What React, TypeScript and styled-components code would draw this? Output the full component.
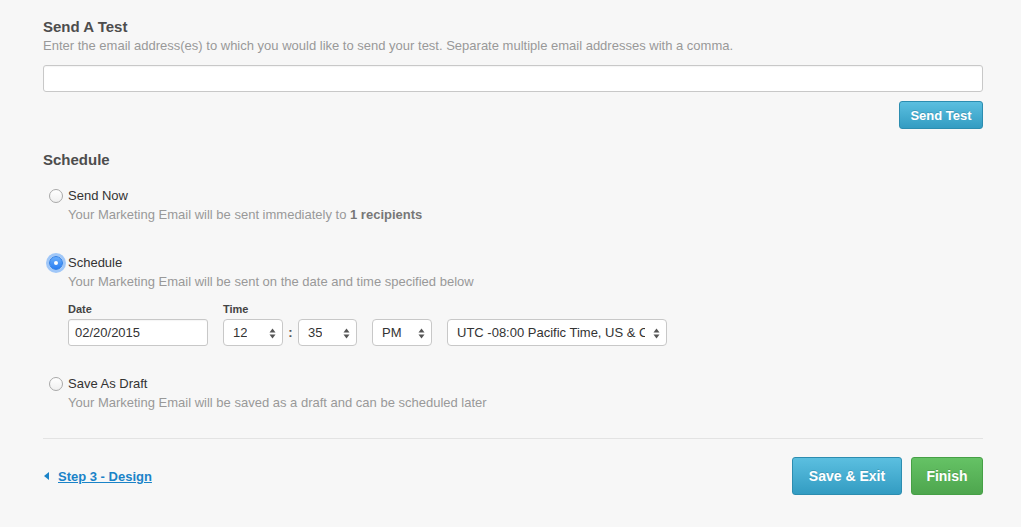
import React from "react";
import styled, { createGlobalStyle } from "styled-components";

const Global = createGlobalStyle`
  html, body { margin: 0; padding: 0; background: #f7f7f7; }
  body { font-family: "Liberation Sans", Arial, sans-serif; color: #333; }
`;

const Page = styled.div`
  width: 940px;
  padding: 18px 38px 0 43px;
  display: flex;
  flex-direction: column;
`;

const Heading = styled.h2`
  margin: 0;
  font-size: 15px;
  line-height: 18px;
  font-weight: bold;
  color: #4d4d4d;
`;

const Help = styled.p`
  margin: 1px 0 0;
  font-size: 13px;
  line-height: 17px;
  color: #999;
`;

const TextInput = styled.input<{ $w?: number }>`
  box-sizing: border-box;
  width: ${(p) => (p.$w ? `${p.$w}px` : "100%")};
  height: 27px;
  border: 1px solid #c8c8c8;
  border-radius: 3px;
  background: #fff;
  padding: 0 6px;
  font-family: "Liberation Sans", Arial, sans-serif;
  font-size: 13px;
  color: #333;
  outline: none;
  box-shadow: inset 0 1px 1px rgba(0,0,0,0.04);
`;

const EmailRow = styled.div`
  margin-top: 11px;
`;

const Actions = styled.div`
  display: flex;
  justify-content: flex-end;
  margin-top: 9px;
`;

const Button = styled.button<{ $variant: "blue" | "green"; $h: number; $w: number }>`
  box-sizing: border-box;
  height: ${(p) => p.$h}px;
  width: ${(p) => p.$w}px;
  border-radius: 3px;
  font-family: "Liberation Sans", Arial, sans-serif;
  font-weight: bold;
  font-size: ${(p) => (p.$h > 30 ? 14 : 13)}px;
  color: #fff;
  cursor: pointer;
  text-shadow: 0 -1px 0 rgba(0,0,0,0.15);
  border: 1px solid ${(p) => (p.$variant === "blue" ? "#2c8db0" : "#46a046")};
  background: ${(p) =>
    p.$variant === "blue"
      ? "linear-gradient(to bottom, #5bbfe0, #339cc2)"
      : "linear-gradient(to bottom, #65c265, #4ea64e)"};
  padding: 0;
`;

const SectionHead = styled(Heading)`
  margin-top: 22px;
`;

const Options = styled.div`
  display: flex;
  flex-direction: column;
  margin-top: 18px;
`;

const Option = styled.div<{ $gap: number }>`
  display: grid;
  grid-template-columns: 25px 1fr;
  margin-bottom: ${(p) => p.$gap}px;
`;

const RadioCell = styled.div`
  padding: 2px 0 0 6px;
`;

const Radio = styled.span<{ $on?: boolean }>`
  display: block;
  box-sizing: border-box;
  width: 14px;
  height: 14px;
  border-radius: 50%;
  position: relative;
  border: 1px solid ${(p) => (p.$on ? "#2f7fe6" : "#a9a9a9")};
  background: ${(p) =>
    p.$on ? "linear-gradient(to bottom, #6aaefc, #2a7ef2)" : "linear-gradient(to bottom, #fff, #f0f0f0)"};
  box-shadow: ${(p) => (p.$on ? "0 0 0 3px rgba(90,160,250,0.55)" : "none")};
  &::after {
    content: "";
    display: ${(p) => (p.$on ? "block" : "none")};
    position: absolute;
    left: 4px;
    top: 4px;
    width: 4px;
    height: 4px;
    border-radius: 50%;
    background: #fff;
  }
`;

const OptLabel = styled.div`
  font-size: 13px;
  line-height: 17px;
  color: #333;
`;

const OptHelp = styled.div`
  font-size: 13px;
  line-height: 17px;
  color: #999;
  margin-top: 2px;
  b { color: #777; }
`;

const Fields = styled.div`
  display: flex;
  align-items: flex-end;
  margin-top: 13px;
  gap: 15px;
`;

const Field = styled.div`
  display: flex;
  flex-direction: column;
`;

const FieldLabel = styled.label`
  font-size: 11px;
  font-weight: bold;
  color: #444;
  line-height: 13px;
  margin-bottom: 3px;
`;

const TimeGroup = styled.div`
  display: flex;
  align-items: center;
`;

const Colon = styled.span`
  width: 15px;
  text-align: center;
  font-size: 13px;
  color: #555;
  font-weight: bold;
`;

const SelectWrap = styled.div<{ $w: number }>`
  position: relative;
  box-sizing: border-box;
  width: ${(p) => p.$w}px;
  height: 27px;
  border: 1px solid #c8c8c8;
  border-radius: 4px;
  background: #fff;
  display: flex;
  align-items: center;
  padding: 0 0 0 9px;
  font-size: 13px;
  color: #333;
  white-space: nowrap;
`;

const SelText = styled.span<{ $clip?: number }>`
  display: block;
  overflow: hidden;
  text-overflow: clip;
  width: ${(p) => (p.$clip ? `${p.$clip}px` : "auto")};
`;

const Arrows = styled.svg`
  position: absolute;
  right: 6px;
  top: 8px;
`;

const Divider = styled.hr`
  margin: 27px 0 0;
  border: 0;
  border-top: 1px solid #e3e3e3;
`;

const Footer = styled.div`
  display: flex;
  align-items: center;
  justify-content: space-between;
  margin-top: 18px;
`;

const BackLink = styled.a`
  display: flex;
  align-items: center;
  gap: 9px;
  color: #1a83c8;
  font-size: 13px;
  font-weight: bold;
  text-decoration: underline;
  cursor: pointer;
  padding-left: 1px;
`;

const FooterButtons = styled.div`
  display: flex;
  gap: 9px;
`;

const Select = ({ w, value, clip }: { w: number; value: string; clip?: number }) => (
  <SelectWrap $w={w}>
    <SelText $clip={clip}>{value}</SelText>
    <Arrows width="7" height="11" viewBox="0 0 7 11">
      <path d="M3.5 0.5 L6.5 4.5 L0.5 4.5 Z" fill="#555" />
      <path d="M3.5 10.5 L6.5 6.5 L0.5 6.5 Z" fill="#555" />
    </Arrows>
  </SelectWrap>
);

const TZ = "UTC -08:00 Pacific Time, US & Canada";

export default function App() {
  return (
    <>
      <Global />
      <Page>
        <Heading>Send A Test</Heading>
        <Help>Enter the email address(es) to which you would like to send your test. Separate multiple email addresses with a comma.</Help>
        <EmailRow>
          <TextInput type="text" />
        </EmailRow>
        <Actions>
          <Button $variant="blue" $h={28} $w={84}>Send Test</Button>
        </Actions>

        <SectionHead>Schedule</SectionHead>
        <Options>
          <Option $gap={31}>
            <RadioCell><Radio /></RadioCell>
            <div>
              <OptLabel>Send Now</OptLabel>
              <OptHelp>Your Marketing Email will be sent immediately to <b>1 recipients</b></OptHelp>
            </div>
          </Option>
          <Option $gap={29}>
            <RadioCell><Radio $on /></RadioCell>
            <div>
              <OptLabel>Schedule</OptLabel>
              <OptHelp>Your Marketing Email will be sent on the date and time specified below</OptHelp>
              <Fields>
                <Field>
                  <FieldLabel>Date</FieldLabel>
                  <TextInput $w={140} defaultValue="02/20/2015" />
                </Field>
                <Field>
                  <FieldLabel>Time</FieldLabel>
                  <TimeGroup>
                    <Select w={60} value="12" />
                    <Colon>:</Colon>
                    <Select w={59} value="35" />
                  </TimeGroup>
                </Field>
                <Select w={60} value="PM" />
                <Select w={220} value={TZ} clip={188} />
              </Fields>
            </div>
          </Option>
          <Option $gap={0}>
            <RadioCell><Radio /></RadioCell>
            <div>
              <OptLabel>Save As Draft</OptLabel>
              <OptHelp>Your Marketing Email will be saved as a draft and can be scheduled later</OptHelp>
            </div>
          </Option>
        </Options>
        <Divider />
        <Footer>
          <BackLink>
            <svg width="5" height="8" viewBox="0 0 5 8"><path d="M5 0 L0 4 L5 8 Z" fill="#1a83c8" /></svg>
            Step 3 - Design
          </BackLink>
          <FooterButtons>
            <Button $variant="blue" $h={38} $w={110}>Save &amp; Exit</Button>
            <Button $variant="green" $h={38} $w={72}>Finish</Button>
          </FooterButtons>
        </Footer>
      </Page>
    </>
  );
}
